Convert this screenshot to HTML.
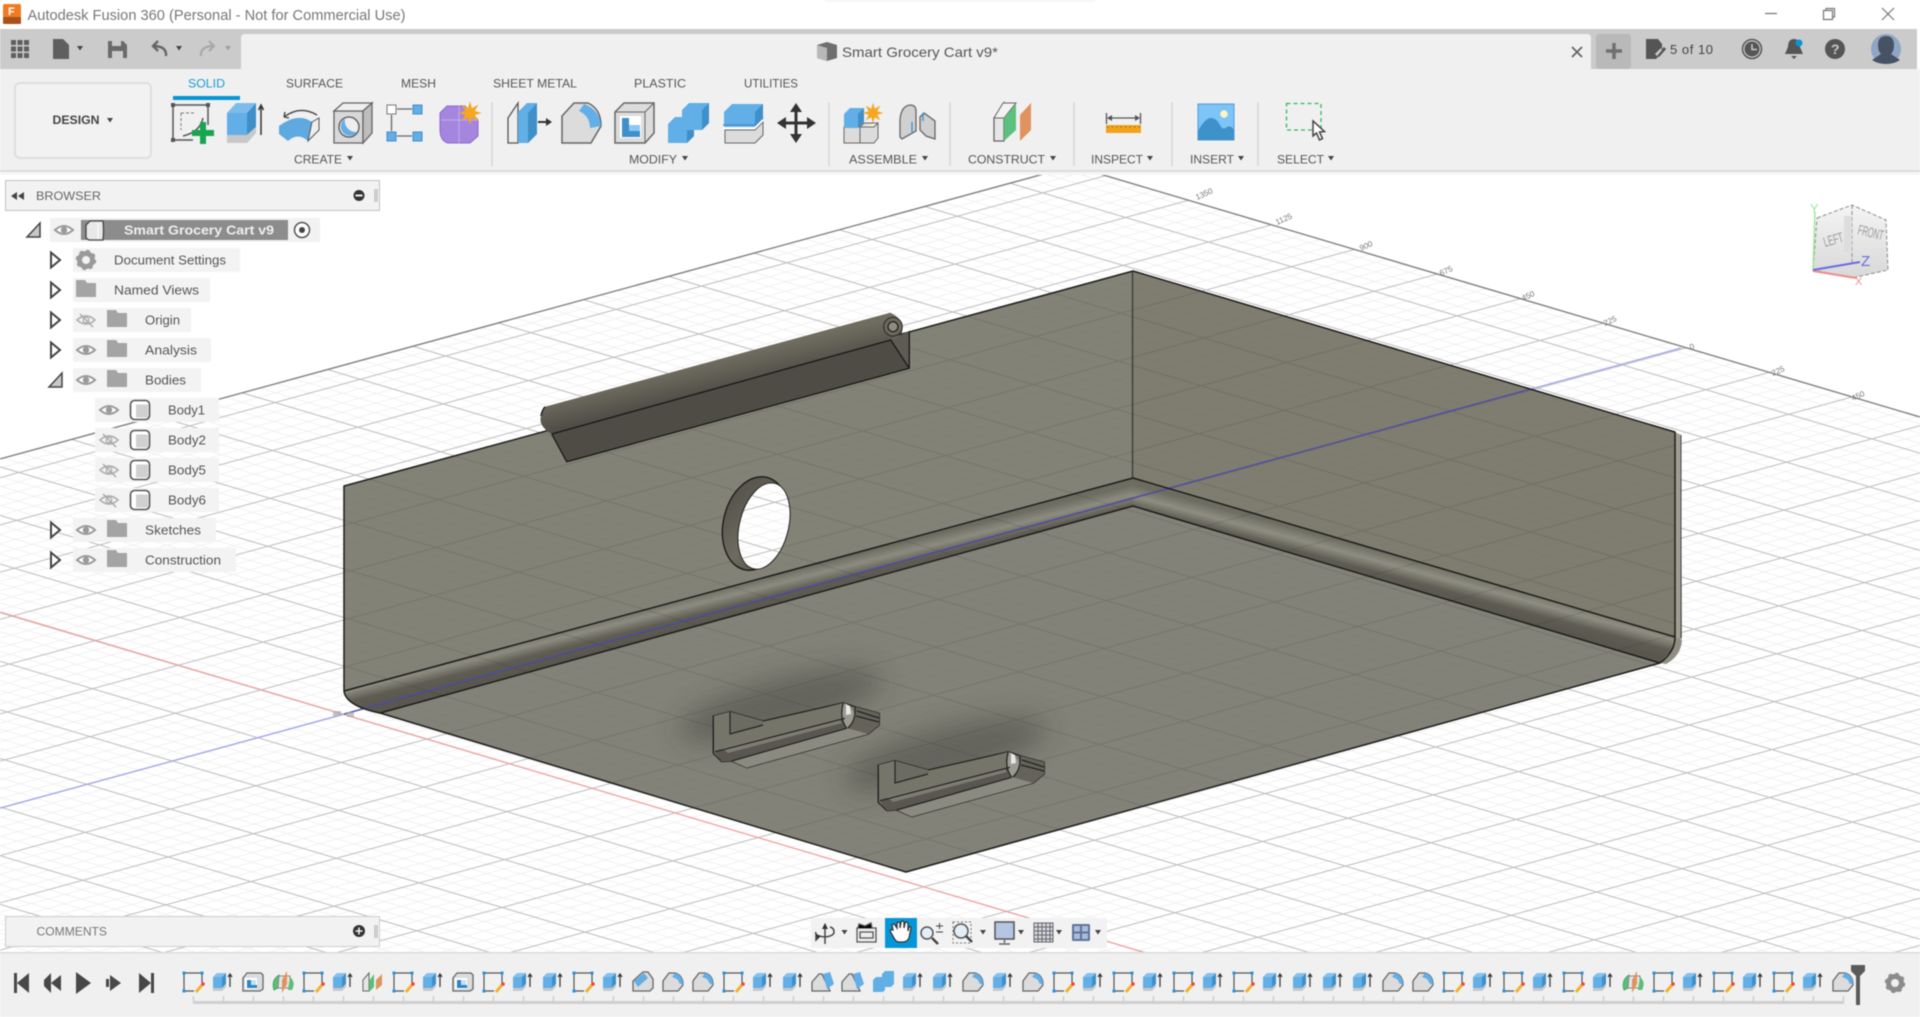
<!DOCTYPE html>
<html><head><meta charset="utf-8"><title>Autodesk Fusion 360</title>
<style>
html,body{margin:0;padding:0;background:#fff;width:1920px;height:1017px;overflow:hidden}
svg{display:block;filter:blur(.4px)}
text{font-family:"Liberation Sans",sans-serif}
</style></head><body>
<svg xmlns="http://www.w3.org/2000/svg" width="1920" height="1017" viewBox="0 0 1920 1017">
<defs>
<pattern id="grid" patternUnits="userSpaceOnUse" width="100" height="100" patternTransform="matrix(.829 .246 -.853 .233 343.5 714)">
<path fill="#ececec" d="M20 0h1.5v100H20zM40 0h1.5v100H40zM60 0h1.5v100H60zM80 0h1.5v100H80zM0 20h100v1.5H0zM0 40h100v1.5H0zM0 60h100v1.5H0zM0 80h100v1.5H0z"/>
<path fill="#c2c2c2" d="M0 0h2.4v100H0zM0 0h100v2.4H0z"/>
</pattern>
<pattern id="gridd" patternUnits="userSpaceOnUse" width="100" height="100" patternTransform="matrix(.829 .246 -.853 .233 343.5 714)">
<path fill="#000" fill-opacity=".02" d="M20 0h1.5v100H20zM40 0h1.5v100H40zM60 0h1.5v100H60zM80 0h1.5v100H80zM0 20h100v1.5H0zM0 40h100v1.5H0zM0 60h100v1.5H0zM0 80h100v1.5H0z"/>
<path fill="#000" fill-opacity=".1" d="M0 0h2.2v100H0zM0 0h100v2.2H0z"/>
</pattern>
<linearGradient id="fl" gradientUnits="userSpaceOnUse" x1="800" y1="568" x2="808" y2="600"><stop offset="0" stop-color="#6e6d62"/><stop offset=".3" stop-color="#8d8c80"/><stop offset=".62" stop-color="#5f5d53"/><stop offset="1" stop-color="#59574e"/></linearGradient>
<linearGradient id="fr" gradientUnits="userSpaceOnUse" x1="1400" y1="556" x2="1392" y2="586"><stop offset="0" stop-color="#6e6d62"/><stop offset=".35" stop-color="#8f8e82"/><stop offset=".7" stop-color="#5f5d53"/><stop offset="1" stop-color="#59574e"/></linearGradient>
<linearGradient id="rail" gradientUnits="userSpaceOnUse" x1="700" y1="364" x2="707" y2="393"><stop offset="0" stop-color="#6f6c60"/><stop offset=".45" stop-color="#625f55"/><stop offset="1" stop-color="#504e47"/></linearGradient>
<linearGradient id="ring" x1="0" y1="0" x2="1" y2="1"><stop offset="0" stop-color="#4f4d45"/><stop offset=".6" stop-color="#6e6c60"/><stop offset="1" stop-color="#4a4840"/></linearGradient>
<linearGradient id="cube" x1="0" y1="0" x2="0" y2="1"><stop offset="0" stop-color="#f4f4f4"/><stop offset="1" stop-color="#d8d8d8"/></linearGradient>
<filter id="sh" x="-50%" y="-100%" width="200%" height="300%"><feGaussianBlur stdDeviation="13"/></filter>
<g id="star"><polygon fill="#f5a623" points="0,-9 1.5,-3.7 6.4,-6.4 3.7,-1.5 9,0 3.7,1.5 6.4,6.4 1.5,3.7 0,9 -1.5,3.7 -6.4,6.4 -3.7,1.5 -9,0 -3.7,-1.5 -6.4,-6.4 -1.5,-3.7"/></g>
<path id="car" fill="#444" d="M-3-2h6l-3 4.5z"/>
<g id="eye"><path fill="#fff" stroke="#9a9a9a" stroke-width="2" d="M-9 0Q0-8 9 0Q0 8-9 0z"/><circle r="3.2" fill="#9a9a9a"/></g>
<g id="eyeoff"><path fill="none" stroke="#b0b0b0" stroke-width="1.6" d="M-9 0Q0-8 9 0Q0 8-9 0z"/><circle r="2.8" fill="none" stroke="#b0b0b0" stroke-width="1.4"/><path stroke="#a8a8a8" stroke-width="1.4" d="M-6-6L7 7"/></g>
<path id="fold" fill="#a4a4a4" d="M0-10h9l2 3h9v14H0z"/>
<path id="tri" fill="#fff" stroke="#444" stroke-width="2" d="M1-7.5L10 0 1 7.5z"/>
<g id="bod"><rect x="-9.500" y="-9.500" width="19" height="19" rx="4" fill="#fff" stroke="#555" stroke-width="1.600"/><rect x="-4" y="-5.500" width="12" height="13" fill="#d0d0d0"/></g>
<g id="tE"><path fill="#62aee6" d="M-10-5h9v11h-9z"/><path fill="#85c1ec" d="M-10-5l4-4h9l-4 4z"/><path fill="#3f8fcb" d="M-1-5l4-4v11l-4 4z"/><path fill="#c8c8c8" d="M-10 6h9l4-4v3l-4 4h-9z"/><path fill="none" stroke="#333" stroke-width="1.200" d="M7 5V-8M5-5l2-3 2 3"/></g>
<g id="tS"><path fill="none" stroke="#555" stroke-width="1.200" d="M-8-9H8M-9-8V8M-8 9H1M9-8V1"/><path fill="#2196e3" d="M-10.500-10.500h3v3h-3zM7.500-10.500h3v3h-3zM-10.500 7.500h3v3h-3z"/><path stroke="#f1b22f" stroke-width="3" d="M3 10L9 3"/><circle cx="10" cy="2" r="1.800" fill="#e8433f"/></g>
<g id="tH"><path fill="#dcdcdc" stroke="#666" stroke-width="1.300" d="M-10-4l4-5h14l2 2v14l-3 2h-17z"/><path fill="#fff" d="M-8-4H4V7H-8z"/><path fill="#2f86c6" d="M-6-2h4v5h6v3H-6z"/><path fill="#8cc4ee" d="M-2-2h5v5h-5z" opacity=".5"/></g>
<g id="tL"><path fill="#5cbd77" stroke="#4aa565" d="M-9 8Q-12-2-4-7l1 12z"/><path fill="#e5e5e5" stroke="#888" d="M-4-6H7V6H-5z"/><path fill="#5cbd77" d="M7-5q6 5 2 13l-4 0z"/><path fill="#e0935f" d="M-1 11V-2l5-9v13z"/></g>
<g id="tP"><path fill="#e6e6e6" stroke="#666" d="M-10-2L-4-9V9h-6z"/><path fill="#5cbd77" d="M-4-1l5-7V5l-5 5z"/><path fill="#e0935f" d="M3 8V-2l6-6V3z"/></g>
<g id="tF"><path fill="#dcdcdc" stroke="#666" stroke-width="1.300" d="M-10 9V-1L-4-9H2Q10-7 10 3L5 9z"/><path fill="#62aee6" d="M2-9Q10-7 10 3L6 1Q6-3 -1-5z"/></g>
<g id="tC"><path fill="#dcdcdc" stroke="#666" stroke-width="1.300" d="M-10 9V-1L0-10H5L10-3V6L7 9z"/><path fill="#62aee6" d="M-9-1L1-9 5-4-5 5z"/></g>
<g id="tD"><path fill="#dcdcdc" stroke="#666" stroke-width="1.300" d="M-11 9V0L-4-8H-1L7 9z"/><path fill="#62aee6" d="M0-8L7-10 11 2 4 7z"/></g>
<g id="tB"><path fill="#62aee6" d="M-10 10V-2l3-3h6V-8l3-3H11V2L8 5H2V8L0 10z"/></g>
<g id="cl">
<path fill="#777568" stroke="#222" stroke-width="1.300" d="M713.300 716L730 711.700 763 721 843.300 702.700 855 706.700 879.300 713.300V725L868.300 734 746.700 767.700 731.700 761 721.700 761.700 713.300 753.300z" stroke-linejoin="round"/>
<path fill="#6c6b61" d="M730 711.700L763 721 763 724 730 734z"/>
<path fill="#76756a" d="M713.300 716L730 711.700V734l33-10 80-21 1 15-129 33z"/>
<path fill="#595750" d="M715 751.700L845 718.300 846.700 728.300 731.700 761 721.700 761.700z"/>
<path fill="#86857a" d="M722 748L840 720 842 723 728 753z" opacity=".8"/>
<path fill="#8b8a80" d="M731.700 761L846.700 728.300 868.300 734 746.700 767.700z"/>
<path fill="#9a9a90" d="M843.300 702.700Q851 705 855 715Q853 723 846 728Q840 720 843.300 702.700z"/>
<path fill="#e8e8e4" d="M846 704l4 2 1 8-5 1z"/>
<path fill="#656359" d="M855 706.700L879.300 713.300V725L868.300 734 848 728Q856 721 855 706.700z"/>
<path fill="none" stroke="#222" stroke-width="1.200" d="M713.300 716V753.300M730 711.700V734L763 725M715 751.700L845 718.300M731.700 761L846.700 728.300M843.300 702.700Q839 718 846.700 728.300M855 706.700Q856 721 848 728M857 711L879 718M856 716L879 722"/>
</g>
</defs>

<rect width="1920" height="1017" fill="#fff"/>
<polygon points="1073,166 1930,419 1930,1017 0,1017 0,459" fill="url(#grid)"/>
<path fill="none" stroke="#808080" stroke-width="1.400" d="M1073 166L1930 420M1073 166L0 459"/>
<g fill="#777" font-size="8" transform="translate(11 3)">
<text transform="translate(1186,197) rotate(-24)">1350</text><text transform="translate(1266,222) rotate(-24)">1125</text><text transform="translate(1350,248) rotate(-24)">900</text><text transform="translate(1430,273) rotate(-24)">675</text><text transform="translate(1512,298) rotate(-24)">450</text><text transform="translate(1594,323) rotate(-24)">225</text><text transform="translate(1680,347) rotate(-24)">0</text><text transform="translate(1762,373) rotate(-24)">225</text><text transform="translate(1842,398) rotate(-24)">450</text>
</g>
<path fill="none" stroke="#f2a0a0" stroke-width="1.200" d="M0 612L1146 953"/>
<path fill="none" stroke="#a4a6f2" stroke-width="1.200" d="M0 808L344 714M1531 389L1681 348"/>

<!-- model -->
<polygon points="344,486 1133,271 1133,478 1100,490 380,713 360,708 344,691" fill="#838277"/>
<polygon points="1133,271 1675,432 1675,637 1133,478" fill="#7f7c70"/>
<polygon points="380,713 906,872 1660,663 1133,506" fill="#828278"/>
<path fill="#a09e92" d="M1675 432l6 3 1 203-1 2-6-3z"/>
<polygon points="344,691 1133,478 1133,506 380,713 360,708 348,700" fill="url(#fl)"/>
<polygon points="1133,478 1675,637 1672,650 1660,663 1133,506" fill="url(#fr)"/>
<path fill="#908e82" d="M1675 637l7 3q-1 16-16 24l-6-1q14-8 15-26z"/>
<polygon points="344,486 1133,271 1675,432 1675,637 1660,663 906,872 380,713 348,700 344,691" fill="url(#gridd)"/>
<ellipse cx="780" cy="705" rx="105" ry="26" fill="#2c2b26" opacity=".35" filter="url(#sh)" transform="rotate(-15 780 705)"/>
<ellipse cx="945" cy="754" rx="105" ry="26" fill="#2c2b26" opacity=".35" filter="url(#sh)" transform="rotate(-15 945 754)"/>
<path fill="none" stroke="#3a3a34" stroke-width="1.300" d="M1132.500 271V478"/>
<path fill="none" stroke="#4b4bab" stroke-width="1.300" d="M344 714L1531 389"/>
<path fill="none" stroke="#1d1d1a" stroke-width="1.500" stroke-linejoin="round" d="M344 691V486L1133 271 1675 432V637M344 691L1133 478 1675 637Q1675 652 1660 663M344 691Q346 706 380 713L1133 506 1660 663 906 872 380 713"/>
<path fill="none" stroke="#444" stroke-width="1" d="M1681 435v203"/>
<!-- rail -->
<polygon points="566.700,461.700 551.700,434 890.700,340 909.300,368.300" fill="#4e4c45"/>
<polygon points="890.700,340 909,331 909.300,368.300" fill="#5d5b52"/>
<path fill="url(#rail)" d="M545 406.700L890 312.700Q904 318 902 333L890.700 340 551.700 434Q538 426 541 416Q541 410 545 406.700z"/>
<path fill="none" stroke="#181816" stroke-width="1.300" stroke-linejoin="round" d="M551.700 434L890.700 340 909.300 368.300 566.700 461.700 551.700 434M541 416Q542 410 545 406.700M909.300 368.300V331"/>
<circle cx="893" cy="326.700" r="9.300" fill="#6c6a5d" stroke="#2a2a26" stroke-width="1"/>
<circle cx="893" cy="326.700" r="5" fill="#8e8c80" stroke="#1d1d1a" stroke-width="1.200"/>
<!-- hole -->
<ellipse cx="755.500" cy="523.500" rx="32" ry="47.500" transform="rotate(14 755.500 523.500)" fill="url(#ring)" stroke="#161614" stroke-width="1.300"/>
<clipPath id="ho"><ellipse cx="764" cy="526" rx="24.500" ry="44" transform="rotate(14 764 526)"/></clipPath>
<rect x="730" y="470" width="70" height="110" fill="#fff" clip-path="url(#ho)"/>
<rect x="730" y="470" width="70" height="110" fill="url(#grid)" clip-path="url(#ho)"/>
<ellipse cx="764" cy="526" rx="24.500" ry="44" transform="rotate(14 764 526)" fill="none" stroke="#222" stroke-width="1"/>
<!-- clips -->
<use href="#cl"/><use href="#cl" x="165" y="49"/>
<!-- origin marker -->
<path fill="#aaa" opacity=".7" d="M333 711h8v5h-8zM347 712h7v5h-7z"/>

<!-- title bar -->
<rect width="1920" height="29" fill="#fff"/>
<rect x="825" y="0" width="270" height="2" fill="#f7f7f7"/>
<rect x="3" y="4" width="18" height="19" rx="2" fill="#ef7b22"/><rect x="3" y="17" width="18" height="7" rx="1" fill="#a8511a"/>
<text x="8" y="15" font-size="11" font-weight="bold" fill="#fff">F</text>
<text x="27.500" y="20" font-size="14.500" fill="#777" textLength="378" lengthAdjust="spacingAndGlyphs">Autodesk Fusion 360 (Personal - Not for Commercial Use)</text>
<path stroke="#777" stroke-width="1.200" fill="none" d="M1765 13.500h12M1823.500 10.500h9v9h-9zM1826 10.500v-2h8.500v8.500h-2M1882 8l12 12M1894 8l-12 12"/>

<!-- tab bar / ribbon -->
<rect x="0" y="29" width="1917" height="40" fill="#cbcbcb"/>
<path fill="#f0f0f0" d="M241 69V38q0-4 4-4h1342q4 0 4 4v31z"/>
<rect x="1596" y="34" width="35" height="35" rx="3" fill="#b9b9b9"/>
<rect x="0" y="69" width="1920" height="101" fill="#f0f0f0"/>
<rect x="0" y="170" width="1920" height="2" fill="#dcdcdc"/>
<rect x="0" y="172" width="1920" height="3" fill="#f6f6f6"/>
<path fill="#5f5f5f" d="M11 40h5v5h-5zM17.500 40h5v5h-5zM24 40h5v5h-5zM11 46.500h5v5h-5zM17.500 46.500h5v5h-5zM24 46.500h5v5h-5zM11 53h5v5h-5zM17.500 53h5v5h-5zM24 53h5v5h-5z"/>
<path fill="#5f5f5f" d="M53 39h10l6 6v14H53z"/>
<use href="#car" x="80" y="48" fill="#666"/>
<path fill="#6a6a6a" d="M108 41h15l4 4v13h-19z"/><path fill="#cbcbcb" d="M112 41h9v5h-9zM112 51h11v7h-11z"/>
<path fill="none" stroke="#666" stroke-width="2.400" d="M166 56Q167 46 153 46M158 41l-5 5 5 5"/>
<use href="#car" x="179" y="48"/>
<path fill="none" stroke="#a8a8a8" stroke-width="2.200" d="M201 56Q200 46 214 46M209 41l5 5-5 5"/>
<path fill="#a0a0a0" d="M225 46h6l-3 4.500z"/>
<path fill="#6e6e6e" d="M827 42l10 3v13l-10 3-10-3V45z"/><path fill="#b8b8b8" d="M817 45l10 3v13l-10-3z"/>
<text x="842" y="57" font-size="14" fill="#555" textLength="156" lengthAdjust="spacingAndGlyphs">Smart Grocery Cart v9*</text>
<path stroke="#666" stroke-width="1.800" d="M1572 47l10 10M1582 47l-10 10"/>
<path stroke="#707070" stroke-width="3.500" d="M1614 43v16M1606 51h16"/>
<path fill="#555" d="M1646 39h12l4 5v9l-6 6h-10z"/><path stroke="#555" stroke-width="3" d="M1658 56l7-8"/><path fill="#cbcbcb" d="M1655 54l6-6 1 2-5 6z"/>
<text x="1670" y="54" font-size="13" fill="#444" textLength="43" lengthAdjust="spacing">5 of 10</text>
<circle cx="1752" cy="49" r="9.500" fill="none" stroke="#555" stroke-width="1.500"/><circle cx="1752" cy="49" r="7.500" fill="#555"/><path stroke="#cbcbcb" stroke-width="1.500" fill="none" d="M1752 44v5.500h5"/>
<path fill="#555" d="M1794 39q6 0 6 8l3 7h-18l3-7q0-8 6-8zM1791 56h6l-3 3z"/><circle cx="1799" cy="43" r="3.500" fill="#0696d7"/>
<circle cx="1835" cy="49" r="10" fill="#555"/><text x="1831" y="54" font-size="14" font-weight="bold" fill="#cbcbcb">?</text>
<circle cx="1886" cy="49" r="15" fill="#8fa6c6"/><path fill="#475264" d="M1886 36q8 0 8 9 0 6-3 9l9 6q-6 4-14 4t-14-4l9-6q-3-3-3-9 0-9 8-9z"/>

<!-- ribbon content -->
<rect x="15" y="83" width="136" height="75" rx="5" fill="#f2f2f2" stroke="#dedede" stroke-width="2"/>
<text x="52.500" y="124" font-size="12" font-weight="bold" fill="#444" textLength="47" lengthAdjust="spacingAndGlyphs">DESIGN</text><use href="#car" x="110" y="120"/>
<g font-size="12" fill="#555">
<text x="188" y="87.500" fill="#1a9ad6" textLength="37" lengthAdjust="spacingAndGlyphs">SOLID</text>
<text x="286" y="87.500" textLength="57" lengthAdjust="spacingAndGlyphs">SURFACE</text>
<text x="401" y="87.500" textLength="35" lengthAdjust="spacingAndGlyphs">MESH</text>
<text x="493" y="87.500" textLength="84" lengthAdjust="spacingAndGlyphs">SHEET METAL</text>
<text x="634" y="87.500" textLength="52" lengthAdjust="spacingAndGlyphs">PLASTIC</text>
<text x="744" y="87.500" textLength="54" lengthAdjust="spacingAndGlyphs">UTILITIES</text>
<text x="294" y="163.500" textLength="48" lengthAdjust="spacingAndGlyphs">CREATE</text>
<text x="629" y="163.500" textLength="48" lengthAdjust="spacingAndGlyphs">MODIFY</text>
<text x="849" y="163.500" textLength="68" lengthAdjust="spacingAndGlyphs">ASSEMBLE</text>
<text x="968" y="163.500" textLength="77" lengthAdjust="spacingAndGlyphs">CONSTRUCT</text>
<text x="1091" y="163.500" textLength="52" lengthAdjust="spacingAndGlyphs">INSPECT</text>
<text x="1190" y="163.500" textLength="44" lengthAdjust="spacingAndGlyphs">INSERT</text>
<text x="1277" y="163.500" textLength="47" lengthAdjust="spacingAndGlyphs">SELECT</text>
</g>
<use href="#car" x="350" y="158"/><use href="#car" x="685" y="158"/><use href="#car" x="925" y="158"/><use href="#car" x="1053" y="158"/><use href="#car" x="1150" y="158"/><use href="#car" x="1241" y="158"/><use href="#car" x="1331" y="158"/>
<rect x="173" y="96" width="67" height="4" fill="#0696d7"/>
<path fill="#dcdcdc" d="M491 102h2v64h-2zM828 102h2v64h-2zM949 102h2v64h-2zM1073 102h2v64h-2zM1171 102h2v64h-2zM1257 102h2v64h-2z"/>
<!-- create sketch -->
<path fill="none" stroke="#555" stroke-width="1.500" d="M175 105h31M173 107v31M175 140h18M208 107v18M203 118Q200 132 183 136"/>
<path fill="#555" d="M171 103h4v4h-4zM206 103h4v4h-4zM171 138h4v4h-4z"/><path fill="none" stroke="#777" stroke-dasharray="3 2" d="M181 113h15M181 113v17"/>
<path fill="#17a650" d="M200 122h6v8h8v6h-8v8h-6v-8h-8v-6h8z"/>
<!-- extrude -->
<path fill="#62aee6" d="M227 113h20v22h-20z"/><path fill="#7dbcea" d="M227 113l9-10h20l-9 10z"/><path fill="#3f8fcb" d="M247 113l9-10v24l-9 8z"/><path fill="#c8c8c8" d="M227 135h20l9-8v6l-9 10h-20z"/><path fill="none" stroke="#333" stroke-width="1.500" d="M261 135V105M258.500 110l2.500-5 2.500 5"/>
<!-- revolve -->
<path fill="#5ea9e0" d="M279 126Q298 112 312 122L308 141Q298 132 288 141L279 134z"/><path fill="#eee" stroke="#555" d="M312 122l7-4v12l-11 11z"/><path fill="none" stroke="#444" stroke-width="1.400" d="M284 117Q300 105 317 115M284 117l1-5M284 117l5 1"/>
<!-- hole -->
<path fill="#d8d8d8" stroke="#666" stroke-width="1.300" d="M334 111h29v32h-29z"/><path fill="#efefef" stroke="#666" stroke-width="1.300" d="M334 111l9-8h29l-9 8z"/><path fill="#bdbdbd" stroke="#666" stroke-width="1.300" d="M363 111l9-8v30l-9 10z"/><circle cx="349" cy="127" r="10" fill="#eee" stroke="#666" stroke-width="1.500"/><path fill="#62aee6" d="M345 119a9 9 0 1 0 12 13a11 11 0 0 1-12-13z"/>
<!-- pattern -->
<rect x="387" y="105" width="9" height="9" fill="#fff" stroke="#777"/><path fill="#62aee6" stroke="#3f8fcb" d="M413 105h9v9h-9zM387 132h9v9h-9zM413 132h9v9h-9z"/><path stroke="#666" stroke-width="1.300" d="M397 109h15M391.500 115v16M397 136h15"/>
<!-- form -->
<path fill="#a586df" stroke="#8a68c8" d="M447 106h18l13 14v16l-8 7h-22q-8-2-8-14v-16z"/><path fill="none" stroke="#c3adeb" d="M441 120h37M459 106v37"/><use href="#star" transform="translate(470,113) scale(1.300)"/>
<!-- press pull -->
<path fill="#eee" stroke="#555" stroke-width="1.300" d="M508 118l10-15v40h-10z"/><path fill="#62aee6" d="M518 112l9-9h10v31l-9 9h-10z"/><path fill="#3f8fcb" d="M528 113l9-10v31l-9 9z"/><path fill="none" stroke="#333" stroke-width="2" d="M538 122h12"/><path fill="#333" d="M546 118l6 4-6 4z"/>
<!-- fillet -->
<path fill="#dcdcdc" stroke="#666" stroke-width="1.500" d="M562 143v-27l12-13h14q13 6 13 23l-10 17z"/><path fill="#62aee6" d="M584 104q16 6 17 22l-11 2q0-12-11-17z"/>
<!-- shell -->
<path fill="#dcdcdc" stroke="#666" stroke-width="1.500" d="M615 112l9-9h30v30l-9 10h-30z"/><path fill="#fff" d="M620 116h21v22h-21z"/><path fill="#3f8fcb" d="M622 118h7v13h11v6h-18z"/><path fill="#8cc8f2" d="M629 125h11v6h-11z"/><path fill="none" stroke="#666" d="M615 112h30v31M645 112l9-9"/>
<!-- combine -->
<path fill="#62aee6" d="M668 124l7-7h7v-7l7-7h20v20l-7 7h-8v6l-7 7h-19z"/><path fill="#3f8fcb" d="M702 110l7-7v20l-7 7zM687 130l7-0v6l-7 7z"/>
<!-- offset -->
<path fill="#62aee6" d="M724 112l8-8h31v17l-8 8h-31z"/><path fill="#3f8fcb" d="M755 112l8-8v17l-8 8z"/><path fill="#dcdcdc" stroke="#666" d="M725 130h30l8-8v13l-8 8h-30z"/><path fill="none" stroke="#fff" stroke-width="2" d="M723 128h32l8-8"/><path fill="none" stroke="#3f8fcb" stroke-width="1.300" d="M723 125h32l8-8"/>
<!-- move -->
<path fill="none" stroke="#333" stroke-width="3" d="M796 110v26M783 123h26"/><path fill="#333" d="M796 103l6 9h-12zM796 143l6-9h-12zM777 123l9-6v12zM816 123l-9-6v12z"/>
<!-- assemble -->
<path fill="#dcdcdc" stroke="#666" d="M844 127h16v16h-16zM860 127h14l4-4v15l-4 5h-14zM860 127l4-4h14"/><path fill="#62aee6" d="M844 114l6-6h14v14l-6 6h-14z"/><path fill="#3f8fcb" d="M858 114l6-6v14l-6 6z"/><use href="#star" transform="translate(873,113) scale(1.150)"/>
<path fill="#d0d0d0" stroke="#666" stroke-width="1.300" d="M900 120q1-14 10-15 6 0 6 6v20l-14 8-2-2zM920 117l4-4 11 8v18l-9-3-6-6z"/><path stroke="#2e8fd8" stroke-width="1.300" d="M912 122v10M923 113v8"/>
<!-- construct -->
<path fill="#e6e6e6" stroke="#666" stroke-width="1.300" d="M994 118l10-15v38h-10z"/><path fill="#f2f2f2" stroke="#666" d="M994 118l9-15h13l-12 15z"/><path fill="#5cc17f" d="M1004 118l12-14v26l-12 11z"/><path fill="#e0935f" d="M1020 141v-26l11-12v27z"/>
<!-- inspect -->
<path fill="none" stroke="#555" stroke-width="1.300" d="M1106.500 113v11M1140.500 113v11M1108 118h31"/><path fill="#555" d="M1107 118l5-3v6zM1140 118l-5-3v6z"/><rect x="1106" y="125" width="35" height="8" fill="#f2a31d"/><path stroke="#a86a10" stroke-dasharray="1.500 3" d="M1107 127h33"/>
<!-- insert -->
<rect x="1198" y="104" width="36" height="36" fill="#7dc4f7" stroke="#4f9ad8"/><path fill="#3e92cc" d="M1198 131q7-13 13-13t10 9q3 3 6 0 4-2 7 3v10h-36z"/><circle cx="1224" cy="114" r="3.800" fill="#fdf5c0"/>
<!-- select -->
<rect x="1286.500" y="103.500" width="34.500" height="26.500" fill="none" stroke="#2fbb5f" stroke-width="1.300" stroke-dasharray="4 3"/>
<path fill="#fff" stroke="#444" stroke-width="1.500" d="M1313 121v15l3.500-3 3 7 3-1.500-3-6.500 5-.5z"/>

<!-- browser -->
<rect x="5.500" y="180.500" width="374" height="30" fill="#f2f2f2" stroke="#c2c2c2"/>
<path fill="#444" d="M17 192l-6 4 6 4zM24 192l-6 4 6 4z"/>
<text x="36" y="200" font-size="12" fill="#666" textLength="65" lengthAdjust="spacingAndGlyphs">BROWSER</text>
<circle cx="359" cy="195.500" r="5.500" fill="#333"/><rect x="355.500" y="194.500" width="7" height="2" fill="#f2f2f2"/>
<path stroke="#aaa" d="M375 189v13M377 189v13"/>
<path fill="#c8c8c8" stroke="#444" stroke-width="1.500" d="M27 237L40 223V237z"/>
<rect x="50" y="218" width="270" height="24" fill="#f2f2f2"/>
<rect x="81" y="220" width="207" height="20" fill="#8c8c8c"/>
<use href="#eye" x="64" y="230"/>
<path fill="#e8e8e8" stroke="#444" stroke-width="1.300" d="M86 225l4-4h13q1 9 0 19H89l-3-2z"/><path stroke="#fff" d="M98 222v17"/>
<text x="124" y="234.500" font-size="12.500" font-weight="bold" fill="#f0f0f0" textLength="150" lengthAdjust="spacingAndGlyphs">Smart Grocery Cart v9</text>
<circle cx="302" cy="230" r="7.500" fill="#fff" stroke="#555" stroke-width="1.500"/><circle cx="302" cy="230" r="3" fill="#444"/>
<g fill="#f3f3f3"><rect x="73" y="248" width="167" height="24"/><rect x="73" y="278" width="137" height="24"/><rect x="73" y="308" width="118" height="24"/><rect x="73" y="338" width="138" height="24"/><rect x="73" y="368" width="128" height="24"/><rect x="95" y="398" width="124" height="24"/><rect x="95" y="428" width="124" height="24"/><rect x="95" y="458" width="124" height="24"/><rect x="95" y="488" width="124" height="24"/><rect x="73" y="518" width="143" height="24"/><rect x="73" y="548" width="163" height="24"/></g>
<use href="#tri" x="50" y="260"/><use href="#tri" x="50" y="290"/><use href="#tri" x="50" y="320"/><use href="#tri" x="50" y="350"/><use href="#tri" x="50" y="530"/><use href="#tri" x="50" y="560"/>
<path fill="#c8c8c8" stroke="#444" stroke-width="1.500" d="M49 387L62 373V387z"/>
<circle cx="86" cy="260" r="6.500" fill="none" stroke="#9a9a9a" stroke-width="5"/><circle cx="86" cy="260" r="9" fill="none" stroke="#9a9a9a" stroke-width="2.500" stroke-dasharray="3.500 3.570"/>
<use href="#fold" x="76" y="290"/>
<use href="#eyeoff" x="86" y="320"/><use href="#eye" x="86" y="350"/><use href="#eye" x="86" y="380"/><use href="#eye" x="86" y="530"/><use href="#eye" x="86" y="560"/>
<use href="#fold" x="107" y="320"/><use href="#fold" x="107" y="350"/><use href="#fold" x="107" y="380"/><use href="#fold" x="107" y="530"/><use href="#fold" x="107" y="560"/>
<use href="#eye" x="109" y="410"/><use href="#eyeoff" x="109" y="440"/><use href="#eyeoff" x="109" y="470"/><use href="#eyeoff" x="109" y="500"/>
<use href="#bod" x="140" y="410"/><use href="#bod" x="140" y="440"/><use href="#bod" x="140" y="470"/><use href="#bod" x="140" y="500"/>
<g font-size="12.500" fill="#555">
<text x="114" y="264.500" textLength="112" lengthAdjust="spacingAndGlyphs">Document Settings</text>
<text x="114" y="294.500" textLength="85" lengthAdjust="spacingAndGlyphs">Named Views</text>
<text x="145" y="324.500" textLength="35" lengthAdjust="spacingAndGlyphs">Origin</text>
<text x="145" y="354.500" textLength="52" lengthAdjust="spacingAndGlyphs">Analysis</text>
<text x="145" y="384.500" textLength="41" lengthAdjust="spacingAndGlyphs">Bodies</text>
<text x="168" y="414.500" textLength="37" lengthAdjust="spacingAndGlyphs">Body1</text>
<text x="168" y="444.500" textLength="38" lengthAdjust="spacingAndGlyphs">Body2</text>
<text x="168" y="474.500" textLength="38" lengthAdjust="spacingAndGlyphs">Body5</text>
<text x="168" y="504.500" textLength="38" lengthAdjust="spacingAndGlyphs">Body6</text>
<text x="145" y="534.500" textLength="56" lengthAdjust="spacingAndGlyphs">Sketches</text>
<text x="145" y="564.500" textLength="76" lengthAdjust="spacingAndGlyphs">Construction</text>
</g>

<!-- viewcube -->
<polygon points="1817,218 1852,205 1886,220 1888,270 1852,278 1813,270" fill="url(#cube)"/>
<path fill="none" stroke="#8c8c8c" stroke-dasharray="4 2" d="M1817 218L1852 205 1886 220 1888 270 1852 278 1813 270zM1852 205V262"/>
<rect x="1844" y="216" width="8" height="36" fill="#ddd"/>
<text transform="translate(1825,247) rotate(-16)" font-size="14" fill="#9a9a9a" textLength="20" lengthAdjust="spacingAndGlyphs">LEFT</text>
<text transform="translate(1857,234) rotate(14)" font-size="14" fill="#9a9a9a" textLength="26" lengthAdjust="spacingAndGlyphs">FRONT</text>
<path fill="none" stroke="#9de89d" stroke-width="1.500" d="M1813 270L1815 212"/><path fill="none" stroke="#f08c8c" stroke-width="2" d="M1813 271L1856 278"/><path fill="none" stroke="#6a6ae0" stroke-width="2" d="M1813 270L1860 262"/>
<text x="1810" y="213" font-size="13" fill="#9de89d">Y</text><text x="1855" y="285" font-size="11" fill="#f08c8c">X</text><text x="1861" y="266" font-size="15" fill="#6a6ae0">Z</text>

<!-- comments -->
<rect x="5.500" y="916.500" width="374" height="30" fill="#f2f2f2" stroke="#cfcfcf"/>
<text x="36.500" y="935.500" font-size="12" fill="#777" textLength="70.500" lengthAdjust="spacingAndGlyphs">COMMENTS</text>
<circle cx="359" cy="931" r="6" fill="#333"/><path stroke="#f2f2f2" stroke-width="1.600" d="M355.500 931h7M359 927.500v7"/>
<path stroke="#aaa" d="M375 925v13M377 925v13"/>

<!-- nav toolbar -->
<rect x="811" y="918" width="296" height="30" fill="#f2f2f2"/>
<rect x="885" y="918" width="32" height="30" fill="#0696d7"/>
<path fill="none" stroke="#444" stroke-width="1.500" d="M825 924v20M816 932q-2 4 9 5 9-1 9-5t-4-5M819 937l-3-3v6z"/><path fill="#333" d="M822 929l3-6 3 6zM816 934l5 2-4 3z"/><use href="#car" x="844.500" y="932"/>
<path fill="#eee" stroke="#555" stroke-width="1.300" d="M857 928h19v14h-19zM860 932h13v6h-13z"/><path stroke="#555" stroke-width="1.300" d="M858 928l1-4 6 2 6-3 1 5"/>
<path fill="#fff" stroke="#333" stroke-width="1.300" d="M893 930l-1-5q2-2 3 0l2 3v-5q2-2 3 0v5l1-6q2-2 3 0v6l1-5q2-2 3 0v8l1-4q2-1 2 1l-2 10q-2 4-6 4h-4q-3 0-5-4l-4-7q1-2 3-1z"/>
<circle cx="927" cy="933" r="6" fill="#e4eef6" stroke="#555" stroke-width="1.500"/><path stroke="#444" stroke-width="2.500" d="M932 938l6 6"/><path stroke="#444" d="M936 926h7M939.500 923v6M936 932h7"/>
<rect x="953" y="922" width="18" height="21" fill="none" stroke="#777" stroke-dasharray="2 2"/><circle cx="961" cy="931" r="7" fill="#e4eef6" stroke="#555" stroke-width="1.500"/><path stroke="#444" stroke-width="2.500" d="M966 936l6 6"/><use href="#car" x="983" y="932"/>
<rect x="995" y="922" width="19" height="17" fill="#b4c6e4" stroke="#555" stroke-width="1.500"/><path stroke="#666" stroke-width="1.500" d="M1004.500 939v4M999 944h11"/><use href="#car" x="1021" y="932"/>
<rect x="1034" y="923" width="19" height="19" fill="#d4d8e2" stroke="#666"/><path stroke="#666" d="M1038 923v19M1042 923v19M1046 923v19M1050 923v19M1034 927h19M1034 931h19M1034 935h19M1034 939h19"/><use href="#car" x="1059" y="932"/>
<rect x="1072" y="924" width="18" height="17" rx="1.500" fill="#5f7399"/><path fill="#a9bcdc" d="M1074 926h6v5.500h-6zM1082 926h6v5.500h-6zM1074 933.500h6v5.500h-6zM1082 933.500h6v5.500h-6z"/><use href="#car" x="1098" y="932"/>

<!-- timeline -->
<rect x="0" y="953" width="1920" height="64" fill="#f0f0f0"/><rect x="0" y="952" width="1920" height="1.500" fill="#dcdcdc"/>
<path fill="#484848" d="M14 973h3v20h-3zM17 983l12-10v20zM61 975v16l-10-8zM44 980l7-7v20l-7-7zM76 972l15 11-15 11zM106 979h3v8h-3zM110 975l11 8-11 8zM139 973l12 10-12 10zM151 973h3v20h-3z"/>
<rect x="193" y="1001" width="1651" height="3" fill="#cfcfcf"/>
<path stroke="#cfcfcf" stroke-width="1.500" d="M193.500 996v6M223.500 996v6M253.500 996v6M283.500 996v6M313.500 996v6M343.500 996v6M373.500 996v6M403.500 996v6M433.500 996v6M463.500 996v6M493.500 996v6M523.500 996v6M553.500 996v6M583.500 996v6M613.500 996v6M643.500 996v6M673.500 996v6M703.500 996v6M733.500 996v6M763.500 996v6M793.500 996v6M823.500 996v6M853.500 996v6M883.500 996v6M913.500 996v6M943.500 996v6M973.500 996v6M1003.500 996v6M1033.500 996v6M1063.500 996v6M1093.500 996v6M1123.500 996v6M1153.500 996v6M1183.500 996v6M1213.500 996v6M1243.500 996v6M1273.500 996v6M1303.500 996v6M1333.500 996v6M1363.500 996v6M1393.500 996v6M1423.500 996v6M1453.500 996v6M1483.500 996v6M1513.500 996v6M1543.500 996v6M1573.500 996v6M1603.500 996v6M1633.500 996v6M1663.500 996v6M1693.500 996v6M1723.500 996v6M1753.500 996v6M1783.500 996v6M1813.500 996v6M1843.500 996v6"/>
<g transform="translate(0 982)">
<use href="#tS" x="193"/><use href="#tE" x="223"/><use href="#tH" x="253"/><use href="#tL" x="283"/><use href="#tS" x="313"/><use href="#tE" x="343"/><use href="#tP" x="373"/><use href="#tS" x="403"/><use href="#tE" x="433"/><use href="#tH" x="463"/><use href="#tS" x="493"/><use href="#tE" x="523"/><use href="#tE" x="553"/><use href="#tS" x="583"/><use href="#tE" x="613"/><use href="#tC" x="643"/><use href="#tF" x="673"/><use href="#tF" x="703"/><use href="#tS" x="733"/><use href="#tE" x="763"/><use href="#tE" x="793"/><use href="#tD" x="823"/><use href="#tD" x="853"/><use href="#tB" x="883"/><use href="#tE" x="913"/><use href="#tE" x="943"/><use href="#tF" x="973"/><use href="#tE" x="1003"/><use href="#tF" x="1033"/><use href="#tS" x="1063"/><use href="#tE" x="1093"/><use href="#tS" x="1123"/><use href="#tE" x="1153"/><use href="#tS" x="1183"/><use href="#tE" x="1213"/><use href="#tS" x="1243"/><use href="#tE" x="1273"/><use href="#tE" x="1303"/><use href="#tE" x="1333"/><use href="#tE" x="1363"/><use href="#tF" x="1393"/><use href="#tF" x="1423"/><use href="#tS" x="1453"/><use href="#tE" x="1483"/><use href="#tS" x="1513"/><use href="#tE" x="1543"/><use href="#tS" x="1573"/><use href="#tE" x="1603"/><use href="#tL" x="1633"/><use href="#tS" x="1663"/><use href="#tE" x="1693"/><use href="#tS" x="1723"/><use href="#tE" x="1753"/><use href="#tS" x="1783"/><use href="#tE" x="1813"/><use href="#tF" x="1843"/>
</g>
<path fill="#5a5a5a" d="M1851 965h14v6l-5 5v29h-4v-29l-5-5z"/>
<circle cx="1895" cy="983" r="6.500" fill="none" stroke="#8c8c8c" stroke-width="5"/><circle cx="1895" cy="983" r="9" fill="none" stroke="#8c8c8c" stroke-width="2.500" stroke-dasharray="3.500 3.570"/>
</svg>
</body></html>
